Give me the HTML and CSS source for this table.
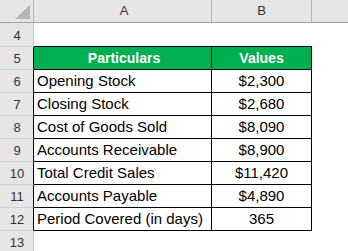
FILE: index.html
```html
<!DOCTYPE html>
<html>
<head>
<meta charset="utf-8">
<link rel="stylesheet" href="styles.css">
</head>
<body>
<div class="sheet">
  <div class="row head">
    <div class="rh corner"><svg width="33" height="22" viewBox="0 0 33 22"><polygon points="15,19 30,5 30,19" fill="#b5b5b5"/></svg></div>
    <div class="ca">A</div>
    <div class="cb">B</div>
    <div class="cc"></div>
  </div>
  <div class="row r4">
    <div class="rh">4</div>
    <div class="ca"></div>
    <div class="cb"></div>
    <div class="cc"></div>
  </div>
  <div class="row t green">
    <div class="rh">5</div>
    <div class="ca center">Particulars</div>
    <div class="cb">Values</div>
    <div class="cc"></div>
  </div>
  <div class="row t">
    <div class="rh">6</div>
    <div class="ca">Opening Stock</div>
    <div class="cb">$2,300</div>
    <div class="cc"></div>
  </div>
  <div class="row t">
    <div class="rh">7</div>
    <div class="ca">Closing Stock</div>
    <div class="cb">$2,680</div>
    <div class="cc"></div>
  </div>
  <div class="row t">
    <div class="rh">8</div>
    <div class="ca">Cost of Goods Sold</div>
    <div class="cb">$8,090</div>
    <div class="cc"></div>
  </div>
  <div class="row t">
    <div class="rh">9</div>
    <div class="ca">Accounts Receivable</div>
    <div class="cb">$8,900</div>
    <div class="cc"></div>
  </div>
  <div class="row t">
    <div class="rh">10</div>
    <div class="ca">Total Credit Sales</div>
    <div class="cb">$11,420</div>
    <div class="cc"></div>
  </div>
  <div class="row t">
    <div class="rh">11</div>
    <div class="ca">Accounts Payable</div>
    <div class="cb">$4,890</div>
    <div class="cc"></div>
  </div>
  <div class="row t">
    <div class="rh">12</div>
    <div class="ca">Period Covered (in days)</div>
    <div class="cb">365</div>
    <div class="cc"></div>
  </div>
  <div class="row">
    <div class="rh">13</div>
    <div class="ca"></div>
    <div class="cb"></div>
    <div class="cc"></div>
  </div>
</div>
</body>
</html>
```
FILE: styles.css
```css
html, body {
  margin: 0;
  padding: 0;
  background: #ffffff;
}
.sheet {
  width: 348px;
  height: 251px;
  overflow: hidden;
  font-family: "Liberation Sans", Arial, sans-serif;
  font-size: 15px;
  color: #000;
}
.row {
  display: flex;
  height: 23px;
}
.row > div {
  box-sizing: border-box;
  height: 23px;
  display: flex;
  align-items: flex-end;
  padding-bottom: 3px;
}
.rh {
  width: 34px;
  flex: none;
  background: #e6e6e6;
  border-right: 1px solid #c6c6c6;
  border-bottom: 1px solid #d0d0d0;
  justify-content: center;
  font-size: 13px;
  color: #333;
  padding-left: 1px;
}
.ca {
  width: 178px;
  flex: none;
  padding-left: 3px;
}
.cb {
  width: 100px;
  flex: none;
  justify-content: center;
}
.cc {
  flex: 1;
}
.head > div {
  background: #e6e6e6;
  border-bottom: 1px solid #a0a0a0;
  font-size: 13px;
  color: #333;
  justify-content: center;
  padding-bottom: 4px;
}
.head .ca, .head .cb {
  border-right: 1px solid #b4b4b4;
}
.head .corner {
  padding: 0;
  align-items: flex-start;
  border-right-color: #b4b4b4;
}
.r4 {
  height: 24px;
}
.r4 > div {
  height: 24px;
}
.r4 .ca, .r4 .cb {
  border-bottom: 1px solid #000;
}
.r4 .ca {
  border-left: 0;
}
.t .rh {
  border-right-color: #000;
}
.t .ca, .t .cb {
  border-right: 1px solid #000;
  border-bottom: 1px solid #000;
}
.t .ca {
  width: 178px;
}
.green .ca, .green .cb {
  background: #00b050;
  color: #fff;
  font-weight: bold;
  font-size: 14px;
}
.center {
  justify-content: center;
}
```
